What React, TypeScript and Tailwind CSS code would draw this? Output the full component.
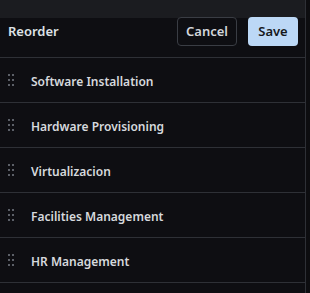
import React from "react";

const items = [
  "Software Installation",
  "Hardware Provisioning",
  "Virtualizacion",
  "Facilities Management",
  "HR Management",
];

function Grip() {
  return (
    <svg width="8" height="12" viewBox="0 0 8 12" className="shrink-0">
      {[0, 5, 10].map((y) =>
        [0, 4].map((x) => (
          <rect key={`${x}-${y}`} x={x} y={y} width="2" height="2" fill="#5c6068" />
        ))
      )}
    </svg>
  );
}

export default function App() {
  return (
    <div
      className="w-[310px] h-[293px] bg-[#0d0d10] overflow-hidden"
      style={{ fontFamily: '"Noto Sans", "Open Sans", sans-serif' }}
    >
      <div className="w-[306px] h-full border-r border-[#2e3036] bg-[#0e0e12]">
        <div className="h-[58px] pt-[6px] flex items-center justify-between pl-[8px] pr-[7px] border-b border-[#2e3036] bg-[linear-gradient(to_bottom,#1b1c20_18px,#0e0e12_18px)]">
          <span className="text-[13px] font-semibold text-[#dfe2e6] pt-[1px]">Reorder</span>
          <div className="flex items-center gap-[11px]">
            <button className="h-[29px] w-[60px] rounded-[4px] border border-[#3a3d44] bg-[#0e0e12] text-[13px] font-semibold text-[#d3d6db]">
              Cancel
            </button>
            <button className="h-[29px] w-[50px] rounded-[4px] bg-[#bcd8f6] text-[13px] font-semibold text-[#16181b]">
              Save
            </button>
          </div>
        </div>
        {items.map((t) => (
          <div
            key={t}
            className="h-[45px] flex items-center border-b border-[#2e3036] pl-[8px]"
          >
            <Grip />
            <span className="ml-[15px] pt-[3px] text-[12px] font-semibold text-[#d6d9dd]">{t}</span>
          </div>
        ))}
      </div>
    </div>
  );
}
